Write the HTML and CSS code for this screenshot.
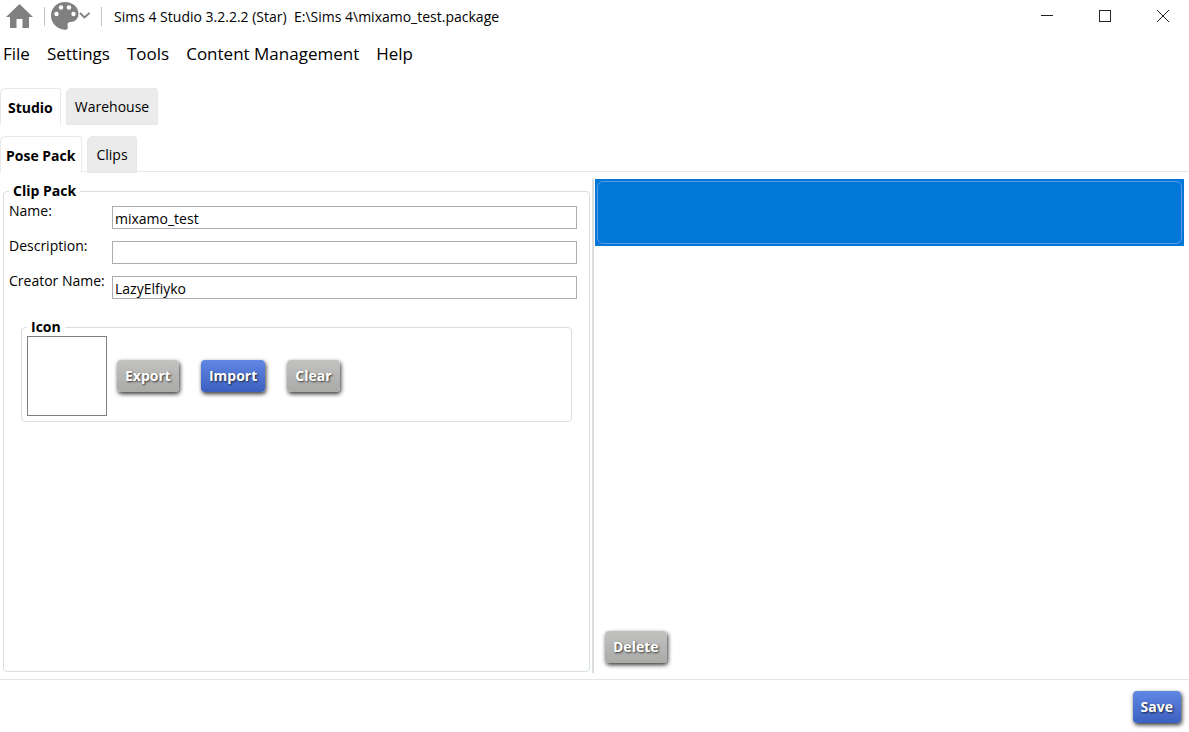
FILE: index.html
```
<!DOCTYPE html>
<html lang="en">
<head>
    <meta charset="UTF-8">
    <meta name="viewport" content="width=device-width, initial-scale=1.0">
    <title>Sims 4 Studio</title>
    <link rel="stylesheet" href="styles.css">
</head>
<body>

    <!-- Title bar -->
    <header class="title-bar">
        <button class="icon-button home" aria-label="Home">
            <svg width="27" height="24" viewBox="0 0 27 24"><path fill="#808080" d="M13.500 0 L27 13 H23 V24 H16.500 V15 H10.500 V24 H4 V13 H0 Z"/></svg>
        </button>
        <span class="divider"></span>
        <button class="icon-button palette" aria-label="Theme">
            <svg width="39" height="28" viewBox="0 0 39 28">
                <path fill="#808080" d="M14 0 C21.500 0 27.500 5 27.500 11.500 C27.500 17 24 20 19.500 20 C17.500 20 16.500 21 16.500 22.500 C16.500 24 17 25 16.800 26 C16.500 27.500 15 28 13.500 27.800 C6 27 0 21.500 0 13.500 C0 6 6 0 14 0 Z"/>
                <circle cx="5.500" cy="12" r="2.200" fill="#fff"/>
                <circle cx="10" cy="5.500" r="2.200" fill="#fff"/>
                <circle cx="18" cy="5.500" r="2.200" fill="#fff"/>
                <circle cx="22.500" cy="12" r="2.200" fill="#fff"/>
                <path fill="none" stroke="#808080" stroke-width="1.800" d="M29 11 L33.500 15.500 L38.500 11"/>
            </svg>
        </button>
        <span class="divider"></span>
        <h1 class="title">Sims 4 Studio 3.2.2.2 (Star)&nbsp; E:\Sims 4\mixamo_test.package</h1>
        <div class="window-buttons">
            <button class="window-button" aria-label="Minimize">
                <svg width="12" height="12" viewBox="0 0 12 12"><path stroke="#222" d="M0 5.500 H12"/></svg>
            </button>
            <button class="window-button" aria-label="Maximize">
                <svg width="12" height="12" viewBox="0 0 12 12"><rect x="0.500" y="0.500" width="11" height="11" fill="none" stroke="#222"/></svg>
            </button>
            <button class="window-button" aria-label="Close">
                <svg width="12" height="12" viewBox="0 0 12 12"><path stroke="#222" d="M0 0 L12 12 M12 0 L0 12"/></svg>
            </button>
        </div>
    </header>

    <nav class="menu">
        <a href="#">File</a>
        <a href="#">Settings</a>
        <a href="#">Tools</a>
        <a href="#">Content Management</a>
        <a href="#">Help</a>
    </nav>

    <!-- Tabs -->
    <div class="tabs main-tabs">
        <button class="tab active">Studio</button>
        <button class="tab">Warehouse</button>
    </div>
    <div class="tabs sub-tabs">
        <button class="tab active">Pose Pack</button>
        <button class="tab">Clips</button>
    </div>

    <main class="content">
        <section class="left-pane">
            <fieldset class="group clip-pack">
                <legend>Clip Pack</legend>
                <div class="row">
                    <label for="name">Name:</label>
                    <input type="text" id="name" value="mixamo_test">
                </div>
                <div class="row">
                    <label for="description">Description:</label>
                    <input type="text" id="description">
                </div>
                <div class="row">
                    <label for="creator">Creator Name:</label>
                    <input type="text" id="creator" value="LazyElfiyko">
                </div>
                <fieldset class="group icon-group">
                    <legend>Icon</legend>
                    <div class="icon-row">
                        <div class="preview"></div>
                        <button class="btn">Export</button>
                        <button class="btn blue">Import</button>
                        <button class="btn">Clear</button>
                    </div>
                </fieldset>
            </fieldset>
        </section>
        <div class="splitter"></div>
        <section class="right-pane">
            <div class="list-item"><div class="list-item-frame"></div></div>
            <button class="btn delete">Delete</button>
        </section>
    </main>

    <footer class="footer">
        <button class="btn blue">Save</button>
    </footer>

</body>
</html>
```
FILE: styles.css
```
* {
    box-sizing: border-box;
}

body {
    margin: 0;
    min-height: 100vh;
    display: flex;
    flex-direction: column;
    background: #fff;
    color: #000;
    font-family: "Open Sans", "Noto Sans", sans-serif;
    font-size: 14px;
}

button {
    font: inherit;
    color: inherit;
    border: none;
    background: none;
    padding: 0;
}

svg {
    display: block;
}

/* Title bar */
.title-bar {
    display: flex;
    align-items: center;
    height: 32px;
    padding-left: 6px;
}

.divider {
    width: 1px;
    height: 19px;
    background: #c3c3c3;
}

.home {
    margin-right: 11px;
}

.palette {
    margin: 0 11px 0 6px;
}

.title {
    margin: 0 0 0 12px;
    font-size: 14px;
    font-weight: normal;
    white-space: nowrap;
}

.window-buttons {
    display: flex;
    margin-left: auto;
    padding-right: 20px;
    gap: 46px;
}

/* Menu */
.menu {
    display: flex;
    gap: 17px;
    height: 44px;
    padding-left: 3px;
    font-size: 17px;
    line-height: 44px;
}

.menu a {
    color: #000;
    text-decoration: none;
}

/* Tabs */
.tabs {
    display: flex;
    gap: 5px;
}

.main-tabs {
    margin-top: 12px;
}

.sub-tabs {
    height: 36px;
    margin-top: 11px;
    border-bottom: 1px solid #e8e8e8;
}

.tab {
    height: 37px;
    padding: 0 8px;
    background: #ebebeb;
    border: 1px solid #e8e8e8;
    border-radius: 6px 3px 0 0;
}

.tab.active {
    padding: 0 7px;
    background: #fff;
    border-bottom: none;
    font-weight: bold;
}

.sub-tabs .active {
    padding: 0 6px 0 5px;
}

/* Content */
.content {
    flex: 1;
    display: grid;
    grid-template-columns: minmax(0, 1fr) 2px minmax(0, 1fr);
    padding: 7px 3px 6px 0;
}

.left-pane {
    display: flex;
    padding: 4px 2px 1px 3px;
}

.splitter {
    background: #dcdcdc;
}

.group {
    min-width: 0;
    margin: 0;
    padding: 0;
    border: 1px solid #d5dfe5;
    border-radius: 4px;
}

.group legend {
    margin-left: 5px;
    padding: 0 4px 2px;
    font-weight: bold;
    line-height: 15px;
}

.clip-pack {
    flex: 1;
}

.row {
    display: grid;
    grid-template-columns: 103px 1fr;
    height: 35px;
    padding: 0 12px 0 5px;
}

.row label {
    line-height: 22px;
    white-space: nowrap;
}

.row input {
    height: 23px;
    margin-top: 6px;
    padding: 1px 2px 0;
    border: 1px solid #abadb3;
    font: inherit;
}

.icon-group {
    margin: 14px 17px 0;
    padding: 0 5px 5px;
}

.icon-group legend {
    margin-left: 0;
}

.icon-row {
    display: flex;
    align-items: center;
    gap: 22px;
}

.preview {
    width: 80px;
    height: 80px;
    margin-right: -12px;
    border: 1px solid #808080;
}

/* Buttons */
.btn {
    height: 32px;
    padding: 0 8px 1px;
    border-radius: 4px;
    background: linear-gradient(#c2c2c0, #a9aba8);
    box-shadow: 1px 2px 4px rgba(0, 0, 0, 0.8);
    color: #fff;
    font-weight: bold;
    text-shadow: 1px 1px 2px rgba(0, 0, 0, 0.7);
}

.btn.blue {
    background: linear-gradient(#6187e4, #3b60c0);
}

/* Right side */
.right-pane {
    display: flex;
    flex-direction: column;
    align-items: flex-start;
    padding: 0 2px 10px 1px;
}

.list-item {
    width: 100%;
    height: 67px;
    padding: 2px;
    background: #0078d7;
}

.list-item-frame {
    height: 100%;
    border: 1px solid #6494ed;
    border-radius: 6px;
}

.delete {
    margin: auto 0 0 10px;
}

.footer {
    display: flex;
    justify-content: flex-end;
    padding: 11px 8px 9px;
    border-top: 1px solid #e5e5e5;
}
```
